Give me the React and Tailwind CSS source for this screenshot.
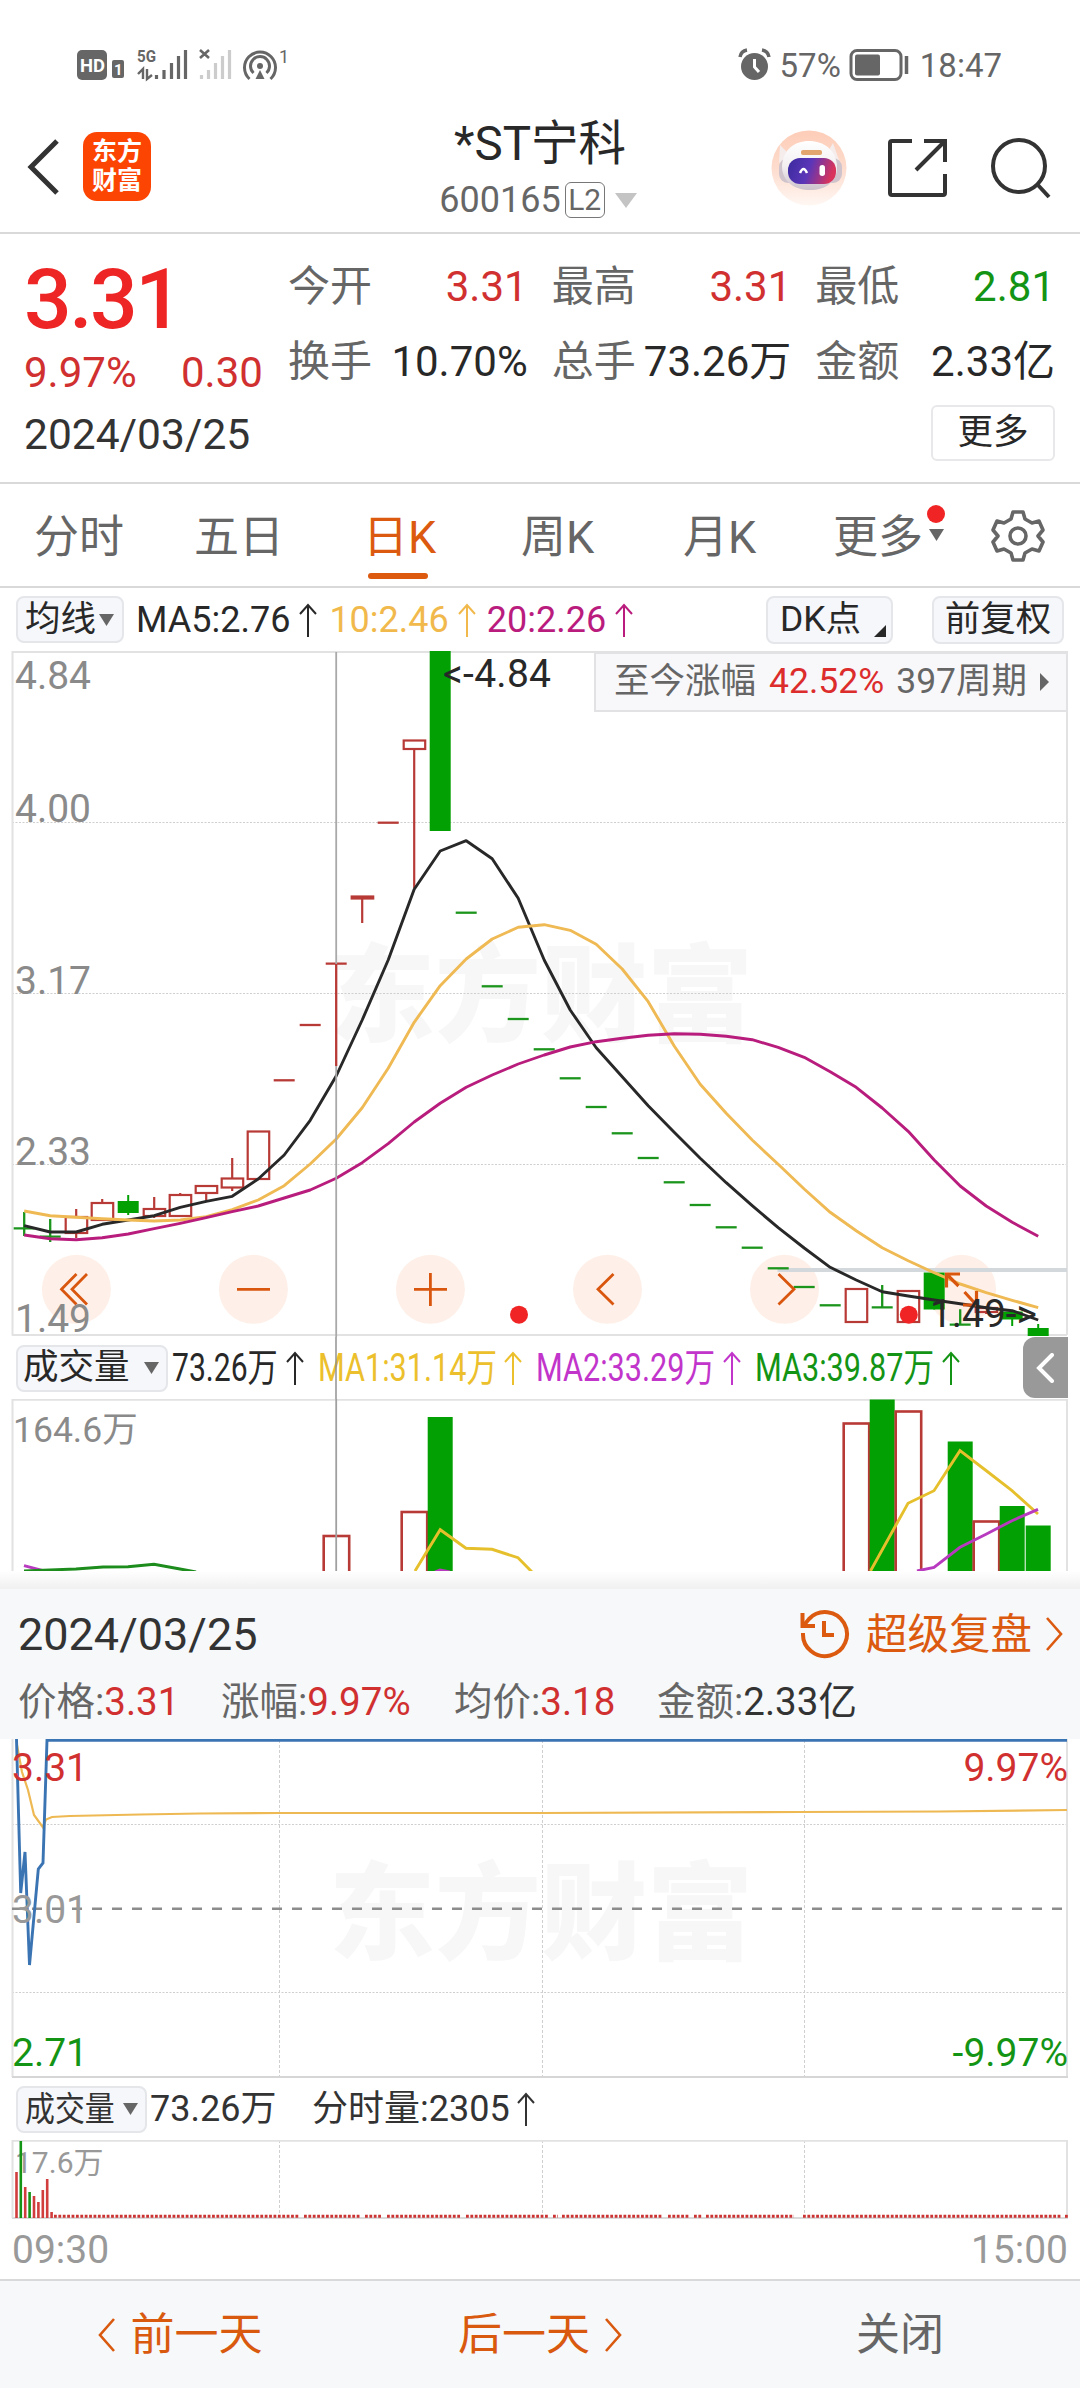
import React from "react";

const RED = "#b83a36";
const GREEN = "#02a002";

const X0 = 24.2;
const STEP = 26;
const cx = (i) => X0 + STEP * i;

// Candles: [index, colour, body top, body bottom, wick top, wick bottom]
const candles = [
  [2, "r", 1217, 1233, 1209, 1238],
  [3, "r", 1203, 1220, 1199, 1220],
  [4, "g", 1201, 1213, 1195, 1215],
  [5, "r", 1209, 1216, 1197, 1218],
  [6, "r", 1195, 1216, 1193, 1217],
  [7, "r", 1186, 1193, 1186, 1201],
  [8, "r", 1178.5, 1187.5, 1158, 1191],
  [9, "r", 1131.5, 1179, 1131.5, 1179],
  [13, "r", 896.5, 898.5, 896, 923],
  [15, "r", 740.5, 749, 740.5, 888],
  [16, "g", 651, 831, 651, 831],
  [32, "r", 1289, 1322, 1289, 1322],
  [34, "r", 1291, 1322, 1291, 1322],
  [35, "g", 1272.5, 1309.5, 1272.5, 1309.5],
  [37, "r", 1308, 1312, 1306, 1314],
  [38, "g", 1311.5, 1319.5, 1311.5, 1326],
  [39, "g", 1328, 1336, 1324, 1336],
];

// Flat days: [index, colour, y, wick top, wick bottom]
const flats = [
  [0, "g", 1228.3, 1212, 1236],
  [1, "g", 1236.7, 1219, 1242],
  [10, "r", 1080.3],
  [11, "r", 1025],
  [12, "r", 963.7, 963.7, 1066],
  [14, "r", 822.7],
  [17, "g", 912.7],
  [18, "g", 986.3],
  [19, "g", 1019],
  [20, "g", 1049.3],
  [21, "g", 1078.3],
  [22, "g", 1107],
  [23, "g", 1133.3],
  [24, "g", 1158],
  [25, "g", 1182.3],
  [26, "g", 1205],
  [27, "g", 1227.3],
  [28, "g", 1247.7],
  [29, "g", 1268.3],
  [30, "g", 1287],
  [31, "g", 1305.3],
  [33, "g", 1307.3, 1285, 1307.3],
  [36, "g", 1324.7, 1309.3, 1324.7],
];

const ma5 = [
  1225.7, 1232, 1232, 1224.3, 1220, 1215.7, 1207.3, 1201.3, 1196.3, 1179, 1155,
  1120.3, 1076, 1020, 960, 889.3, 851, 840.7, 858.7, 898.3, 960, 1010, 1047.7,
  1076.7, 1105.7, 1132.3, 1158.3, 1182.7, 1205.7, 1227.7, 1248, 1267.3, 1280,
  1291.7, 1296, 1300, 1303.7, 1307.7, 1310.7, 1320,
];
const ma10 = [
  1211, 1215.7, 1217.3, 1218.7, 1220, 1221, 1220, 1216.7, 1209.7, 1200, 1185.7,
  1164, 1139, 1107.7, 1068.3, 1022.3, 985.7, 959, 939, 927.3, 924.7, 930.3,
  944.3, 969, 1001.7, 1046, 1084.3, 1113.3, 1140, 1164.3, 1189, 1212.3, 1230.7,
  1247.7, 1260.7, 1272.7, 1284, 1292.7, 1300.3, 1307.7,
];
const ma20 = [
  1235, 1238.7, 1239.7, 1237.7, 1234, 1228.7, 1223.3, 1217.7, 1211.7, 1206,
  1198, 1190, 1178.3, 1162.7, 1143.7, 1122, 1103.3, 1087.3, 1075, 1064, 1055,
  1047, 1041.7, 1038.3, 1035.3, 1033.7, 1034.3, 1036.3, 1039.7, 1047.3, 1057.3,
  1071.7, 1087.3, 1108, 1131.3, 1160, 1186, 1206, 1222.3, 1236.3,
];

const volumes = [
  [12, "r", 1536],
  [15, "r", 1512],
  [16, "g", 1417],
  [32, "r", 1423.5],
  [33, "g", 1399.5],
  [34, "r", 1411.5],
  [36, "g", 1441.5],
  [37, "r", 1521.5],
  [38, "g", 1506],
  [39, "g", 1525.5],
];

const minuteBars = [
  [16.5, "r", 2172],
  [20.8, "g", 2141],
  [25.2, "r", 2187],
  [29.6, "g", 2192],
  [34, "r", 2196],
  [38.4, "r", 2202],
  [42.8, "r", 2190],
  [47.2, "r", 2179],
  [51.6, "r", 2212],
];

// Stretches of the session with trades in every minute
const tradedRanges = [
  [54, 299], [304, 360], [365, 382], [387, 461], [466, 549], [553, 558],
  [562, 662], [668, 689], [694, 702], [706, 794], [803, 1061], [1065, 1068],
];

const toPoints = (list) => list.map((y, i) => `${cx(i)},${y}`).join(" ");

const Watermark = ({ y }) => (
  <text
    x="329"
    y={y}
    fontSize="106"
    fontWeight="900"
    textLength="424"
    lengthAdjust="spacingAndGlyphs"
    fill="#f7f7f7"
  >
    东方财富
  </text>
);

const UpArrow = ({ className = "" }) => (
  <svg
    width="18"
    height="34"
    viewBox="0 0 18 34"
    fill="none"
    stroke="currentColor"
    strokeWidth="2"
    className={`shrink-0 ${className}`}
  >
    <path d="M9 34V2M1 11L9 2L17 11" />
  </svg>
);

const Chevron = ({ left, className = "" }) => (
  <svg
    width="18"
    height="34"
    viewBox="0 0 18 34"
    fill="none"
    stroke="currentColor"
    strokeWidth="2.6"
    className={className}
  >
    <path d={left ? "M16 1L2 17L16 33" : "M2 1L16 17L2 33"} />
  </svg>
);

const DownTriangle = ({ className = "" }) => (
  <svg width="15" height="12" viewBox="0 0 15 12" className={`shrink-0 fill-[#666] ${className}`}>
    <path d="M0 0H15L7.5 12Z" />
  </svg>
);

const StatusBar = () => (
  <div className="h-[130px] pt-[48px] pl-[77px] pr-[78px] flex items-start justify-between text-[#666]">
    <svg width="215" height="34" viewBox="77 48 215 34" fill="none" stroke="#666" className="overflow-visible">
      <rect x="77" y="50" width="30" height="30" rx="5" fill="#666" stroke="none" />
      <text x="80" y="72" fontSize="19" fontWeight="700" fill="#fff" stroke="none" textLength="25" lengthAdjust="spacingAndGlyphs">
        HD
      </text>
      <rect x="112" y="60" width="12" height="18" rx="2" fill="#666" stroke="none" />
      <text x="114" y="75" fontSize="15" fontWeight="700" fill="#fff" stroke="none">
        1
      </text>
      <text x="137" y="61.500" fontSize="17" fontWeight="700" fill="#666" stroke="none" textLength="19" lengthAdjust="spacingAndGlyphs">
        5G
      </text>
      <path d="M143 79V69L138 74M147 69V79L152 75" strokeWidth="2.4" />
      <path d="M156.500 75V79M164 70V79M171.500 63V79M178.500 56V79M185.500 50V79" strokeWidth="3.2" />
      <path d="M200 50L209 58M209 50L200 58" strokeWidth="2.6" />
      <path d="M201.500 75V79M208.500 70V79M215.500 63V79M222.500 56V79M229.500 50V79" strokeWidth="3.2" stroke="#ccc" />
      <path d="M249.500 79A15.500 15.500 0 1 1 270.500 79" strokeWidth="3" />
      <path d="M253.500 73A9.500 9.500 0 1 1 266.500 73" strokeWidth="3" />
      <circle cx="260" cy="66" r="3" fill="#666" stroke="none" />
      <path d="M260 70L255.500 79H264.500Z" fill="#666" stroke="none" />
      <text x="279" y="63" fontSize="18" fill="#666" stroke="none">
        1
      </text>
    </svg>
    <div className="flex items-center h-[34px] text-[33px] leading-none">
      <svg width="33" height="34" viewBox="737 48 33 34" className="mr-[9px]">
        <circle cx="753.500" cy="66.500" r="13.500" fill="#666" />
        <path d="M739 57Q740 51 746 50M761 50Q767 51 768 57" stroke="#666" strokeWidth="3.500" fill="none" />
        <path d="M753.500 59V67L758 72" stroke="#fff" strokeWidth="3" fill="none" />
      </svg>
      <span>57%</span>
      <svg width="60" height="34" viewBox="849 48 60 34" className="ml-[8px] mr-[11px]">
        <rect x="851" y="50.500" width="50" height="29" rx="6" fill="none" stroke="#666" strokeWidth="3" />
        <rect x="855" y="54.500" width="25" height="21" rx="2" fill="#666" />
        <path d="M906.500 56V74" stroke="#666" strokeWidth="3.500" />
      </svg>
      <span>18:47</span>
    </div>
  </div>
);

const RobotAvatar = () => (
  <svg width="78" height="78" viewBox="0 0 78 78">
    <defs>
      <linearGradient id="halo" x1="0" y1="0" x2="0" y2="1">
        <stop offset="0" stopColor="#fdcdb8" />
        <stop offset="0.5" stopColor="#fddccd" />
        <stop offset="1" stopColor="#fff7f3" />
      </linearGradient>
      <linearGradient id="visor" x1="0" y1="0" x2="1" y2="0.2">
        <stop offset="0" stopColor="#3b2a9e" />
        <stop offset="0.5" stopColor="#5b36b8" />
        <stop offset="1" stopColor="#d8345c" />
      </linearGradient>
      <linearGradient id="helmet" x1="0" y1="0" x2="0" y2="1">
        <stop offset="0" stopColor="#ffffff" />
        <stop offset="0.5" stopColor="#f4f0f2" />
        <stop offset="1" stopColor="#cdc3cb" />
      </linearGradient>
    </defs>
    <circle cx="39" cy="39" r="37.500" fill="url(#halo)" />
    <path d="M9 34L10 16L21 27ZM70 34L63 14L56 26Z" fill="#f5ecec" />
    <rect x="9" y="29" width="63" height="25" rx="9" fill="#cfc3cc" />
    <path d="M39 12C54 12 66 21 67 37C68 53 55 61 40 61C25 61 12 53 12 37C13 21 24 12 39 12Z" fill="url(#helmet)" />
    <rect x="18" y="29" width="48" height="26" rx="12" fill="url(#visor)" />
    <rect x="31" y="21" width="21" height="5" rx="2" fill="#e2a56e" />
    <path d="M30 44Q33.500 36 37 44" stroke="#fff" strokeWidth="2.500" fill="none" />
    <rect x="49.500" y="36" width="5.500" height="11" rx="2.700" fill="#fff" />
  </svg>
);

const Header = () => (
  <header className="h-[104px] border-b-2 border-[#d9d9d9] flex items-center justify-between pl-[26px] pr-[28px] pb-[27px] relative">
    <div className="flex items-center">
      <svg width="34" height="56" viewBox="0 0 34 56" fill="none" stroke="#333" strokeWidth="5" className="mt-[-2px]">
        <path d="M31 2L5 28L31 54" />
      </svg>
      <div className="ml-[23px] mt-[-2px] w-[68px] h-[69px] rounded-[14px] bg-[#fd4503] text-white font-bold text-[25px] leading-[29px] pt-[5px] text-center">
        东方
        <br />
        财富
      </div>
    </div>

    {/* Title sits over the bar so that it stays centred */}
    <div className="absolute left-0 right-0 top-[-11px] flex flex-col items-center">
      <h1 className="text-[47.500px] leading-[50px] text-[#282828]">*ST宁科</h1>
      <div className="mt-[12px] mr-[4px] h-[38px] flex items-center text-[#666] text-[36px] leading-none">
        600165
        <span className="ml-[4px] w-[40px] h-[36px] border-[1.500px] border-[#777] rounded-[6px] flex items-center justify-center text-[30px]">
          L2
        </span>
        <svg width="22" height="15" viewBox="0 0 22 15" className="ml-[10px] fill-[#c4c4c4]">
          <path d="M0 0H22L11 15Z" />
        </svg>
      </div>
    </div>

    <div className="flex items-center">
      <RobotAvatar />
      <svg width="62" height="62" viewBox="0 0 62 62" fill="none" stroke="#333" strokeWidth="4" className="ml-[39px]">
        <path d="M25 4H5Q3 4 3 6V56Q3 58 5 58H56Q58 58 58 56V37M37 4H58V25M57 5L29 33" />
      </svg>
      <svg width="62" height="62" viewBox="0 0 62 62" fill="none" stroke="#333" strokeWidth="4" className="ml-[41px]">
        <circle cx="29" cy="29" r="26" />
        <path d="M47 47L59 60" />
      </svg>
    </div>
  </header>
);

const stats = [
  ["今开", "3.31", "text-[#d13030]"],
  ["最高", "3.31", "text-[#d13030]"],
  ["最低", "2.81", "text-[#149414]"],
  ["换手", "10.70%", "text-[#282828]"],
  ["总手", "73.26万", "text-[#282828]"],
  ["金额", "2.33亿", "text-[#282828]"],
];

const QuotePanel = () => (
  <section className="h-[250px] border-b-2 border-[#d9d9d9] flex text-[42px] leading-none text-[#282828]">
    <div className="w-[288px] pl-[24px]">
      <div className="h-[127px] pt-[4px] flex items-center text-[84px] tracking-[-2.500px] font-medium text-[#ee2525]">
        3.31
      </div>
      <div className="h-[24px] flex items-center text-[#d13030]">
        <span className="w-[157px]">9.97%</span>
        <span>0.30</span>
      </div>
      <div className="h-[101px] flex items-center text-[42.500px] text-[#333]">2024/03/25</div>
    </div>
    <div className="w-[767px] pt-[15px] flex flex-col items-end">
      <div className="w-full grid grid-cols-3 gap-x-[24px]">
        {stats.map(([label, value, color]) => (
          <div key={label} className="h-[75px] flex items-center justify-between whitespace-nowrap">
            <span className="text-[#666]">{label}</span>
            <span className={color}>{value}</span>
          </div>
        ))}
      </div>
      <button className="mt-[6px] w-[124px] h-[56px] border-2 border-[#e8e8ea] rounded-[6px] text-[35.500px]">
        更多
      </button>
    </div>
  </section>
);

const Tabs = () => (
  <nav className="h-[104px] border-b-2 border-[#d9d9d9] flex text-[45px] leading-none text-[#666] pl-[34px] whitespace-nowrap">
    <span className="w-[160px] pt-[31px]">分时</span>
    <span className="w-[169px] pt-[31px]">五日</span>
    <div className="w-[158px] pt-[31px] text-[#dc5a10]">
      日K
      <div className="mt-[13px] ml-[5px] w-[60px] h-[6px] rounded-full bg-[#dc5a10]" />
    </div>
    <span className="w-[162px] pt-[31px]">周K</span>
    <span className="w-[150px] pt-[31px]">月K</span>
    <div className="w-[158px] pt-[31px] relative">
      更多
      <span className="absolute left-[94px] top-[21px] w-[18px] h-[18px] rounded-full bg-[#f02424]" />
      <DownTriangle className="absolute left-[96px] top-[45px]" />
    </div>
    <svg width="54" height="54" viewBox="0 0 54 54" fill="none" stroke="#666" strokeWidth="3.600" strokeLinejoin="round" className="mt-[25px]">
      <path d="M22 3H32L34 10L41 14L48 12L52 21L47 27L52 33L48 42L41 40L34 44L32 51H22L20 44L13 40L6 42L2 33L7 27L2 21L6 12L13 14L20 10Z" />
      <circle cx="27" cy="27" r="8" />
    </svg>
  </nav>
);

const IndicatorRow = () => (
  <div className="h-[63px] pl-[16px] pr-[16px] flex items-center justify-between text-[36px] leading-none text-[#282828] whitespace-nowrap">
    <div className="flex items-center">
      <div className="w-[108px] h-[47px] rounded-[8px] border-2 border-[#e4e6ea] bg-[#f6f7fa] flex items-center pl-[7px] text-[35.500px]">
        均线
        <DownTriangle className="ml-[3px]" />
      </div>
      <span className="ml-[12px]">MA5:2.76</span>
      <UpArrow className="ml-[9px]" />
      <span className="ml-[12px] flex items-center text-[#f1b94c]">
        10:2.46
        <UpArrow className="ml-[9px]" />
      </span>
      <span className="ml-[11px] flex items-center text-[#ba1c7e]">
        20:2.26
        <UpArrow className="ml-[9px]" />
      </span>
    </div>
    <div className="flex gap-[39px] text-[35.500px]">
      <div className="w-[127px] h-[48px] rounded-[8px] border-2 border-[#e4e6ea] bg-[#f6f7fa] flex items-center pl-[12px] relative">
        DK点
        <svg width="12" height="12" className="absolute right-[5px] bottom-[5px] fill-[#282828]">
          <path d="M12 0V12H0Z" />
        </svg>
      </div>
      <div className="w-[132px] h-[48px] rounded-[8px] border-2 border-[#e4e6ea] bg-[#f6f7fa] flex items-center justify-center">
        前复权
      </div>
    </div>
  </div>
);

const ControlDiscs = () => (
  <g fill="#fef0e8">
    {[76.4, 253.4, 430.4, 607.5, 784.5, 961.6].map((x) => (
      <circle key={x} cx={x} cy="1289.300" r="34.500" />
    ))}
  </g>
);

const ControlIcons = () => (
  <g fill="none" stroke="#d9560f" strokeWidth="2.800">
    <path d="M76.500 1274L61.500 1289.300L76.500 1304.500M87 1274L72 1289.300L87 1304.500" />
    <path d="M237 1289.300H270M414 1289.300H447M430.400 1273V1306" />
    <path d="M613.500 1274L598 1289.300L613.500 1304.500M778.500 1274L794 1289.300L778.500 1304.500" />
    <path
      d="M946.500 1287.500V1274H960M947 1274.500L958.500 1286M976.500 1291V1305H963M964.500 1292L976 1304.500"
      strokeWidth="3.200"
    />
  </g>
);

const KLineChart = () => (
  <div className="relative h-[686px]">
    <svg width="1080" height="686" viewBox="0 651 1080 686" className="block overflow-visible">
      <Watermark y="1033" />
      <g stroke="#cfcfcf" strokeWidth="1" strokeDasharray="2 1.500">
        <path d="M12 822.500H1067M12 993.500H1067M12 1164.500H1067" />
      </g>
      <path d="M12.500 651V1335.500M12 652H1067M1067 651V1335M12 1335H1067" stroke="#e2e2e2" strokeWidth="2" fill="none" />
      <ControlDiscs />
      <path d="M777.500 1270H1067" stroke="#d3d8dc" strokeWidth="4" />

      {candles.map(([i, c, top, bottom, high, low]) =>
        c === "g" ? (
          <g key={i} fill={GREEN} stroke={GREEN} strokeWidth="2">
            <path d={`M${cx(i)} ${high}V${low}`} />
            <rect x={cx(i) - 10.5} y={top} width="21" height={bottom - top} stroke="none" />
          </g>
        ) : (
          <g key={i} fill="none" stroke={RED} strokeWidth="2.200">
            <path d={`M${cx(i)} ${high}V${top}M${cx(i)} ${bottom}V${low}`} />
            <rect x={cx(i) - 10.5} y={top} width="21.500" height={bottom - top} />
          </g>
        )
      )}
      {flats.map(([i, c, y, high, low]) => (
        <path
          key={i}
          d={`M${cx(i) - 10.5} ${y}H${cx(i) + 10.5}` + (high ? `M${cx(i)} ${high}V${low}` : "")}
          stroke={c === "g" ? "#1c951c" : RED}
          strokeWidth="2.300"
          fill="none"
        />
      ))}

      <g fill="none" strokeWidth="2.900" strokeLinejoin="round">
        <polyline points={toPoints(ma5)} stroke="#282828" />
        <polyline points={toPoints(ma10)} stroke="#efb953" />
        <polyline points={toPoints(ma20)} stroke="#b81c7c" />
      </g>
      <ControlIcons />

      <g fontSize="39" fill="#8a8a8a">
        <text x="15" y="689">4.84</text>
        <text x="15" y="821.500">4.00</text>
        <text x="15" y="993.500">3.17</text>
        <text x="15" y="1164.500">2.33</text>
        <text x="15" y="1331.500">1.49</text>
      </g>
      <g fontSize="39" fill="#282828">
        <text x="443" y="686.500" textLength="108">&lt;-4.84</text>
        <text x="930" y="1326.500" textLength="107">1.49-&gt;</text>
      </g>
      <circle cx="519" cy="1314.700" r="9" fill="#f02424" />
      <circle cx="908.800" cy="1314.700" r="9" fill="#f02424" />
      <path d="M336.200 652V964M336.200 1066V1337" stroke="#a9a9a9" strokeWidth="1.800" />
    </svg>

    {/* Gain-to-date ribbon in the chart corner */}
    <div className="absolute top-px left-[594px] w-[474px] h-[60px] bg-[#f8f8fa] border-2 border-[#e2e2e4] flex items-center pl-[18px] text-[35.500px] leading-none text-[#666] whitespace-nowrap">
      至今涨幅
      <span className="ml-[13px] text-[#dc2c2c]">42.52%</span>
      <span className="ml-[12px]">397周期</span>
      <svg width="10" height="18" className="ml-[13px] fill-[#666]">
        <path d="M0 0L9 9L0 18Z" />
      </svg>
    </div>
  </div>
);

// Text squeezed horizontally into the width of its box
const Narrow = ({ children, className, scale = "scale-x-[0.785]" }) => (
  <span className={`shrink-0 ${className}`}>
    <span className={`inline-block origin-left whitespace-nowrap ${scale}`}>{children}</span>
  </span>
);

const VolumeHeader = () => (
  <div className="relative h-[62px] pl-[16px] flex items-center text-[39px] leading-none text-[#282828]">
    <div className="w-[152px] h-[47px] shrink-0 rounded-[8px] border-2 border-[#e4e6ea] bg-[#f6f7fa] flex items-center pl-[5px] text-[35.500px]">
      成交量
      <DownTriangle className="ml-[14px]" />
    </div>
    <Narrow className="ml-[4px] w-[114px]" scale="scale-x-[0.772]">
      73.26万
    </Narrow>
    <UpArrow />
    <div className="ml-[14px] flex items-center text-[#ecc02c]">
      <Narrow className="w-[186px]">MA1:31.14万</Narrow>
      <UpArrow />
    </div>
    <div className="ml-[14px] flex items-center text-[#c235cb]">
      <Narrow className="w-[187px]">MA2:33.29万</Narrow>
      <UpArrow />
    </div>
    <div className="ml-[14px] flex items-center text-[#149414]">
      <Narrow className="w-[187px]">MA3:39.87万</Narrow>
      <UpArrow />
    </div>
    <div className="absolute left-[336px] -ml-px top-0 w-[2px] h-full bg-[#8a8a8a]/70" />
    <div className="absolute left-[1023px] top-0 w-[45px] h-[61px] rounded-l-[12px] bg-[#999] flex items-center justify-center">
      <svg width="20" height="30" viewBox="0 0 20 30" fill="none" stroke="#fff" strokeWidth="4" strokeLinecap="round">
        <path d="M16 2L3 15L16 28" />
      </svg>
    </div>
  </div>
);

const VolumeChart = () => (
  <svg width="1080" height="172" viewBox="0 1399 1080 172" className="block">
    <path d="M12.500 1399V1571M12 1399.800H1067M1067 1399V1571" stroke="#e2e2e2" strokeWidth="2" fill="none" />
    <text x="13" y="1442" fontSize="35.500" fill="#8a8a8a">
      164.6万
    </text>
    {volumes.map(([i, c, top]) =>
      c === "g" ? (
        <rect key={i} x={cx(i) - 12.5} y={top} width="25" height="180" fill={GREEN} />
      ) : (
        <rect key={i} x={cx(i) - 12.5} y={top} width="25.500" height="180" fill="none" stroke={RED} strokeWidth="2.600" />
      )
    )}
    <g fill="none" strokeWidth="2.900">
      <path d="M24 1565.700L48 1572M435 1572L440 1570L450 1572" stroke="#b83abf" />
      <path d="M24 1571L76 1569L103 1567L128 1566.700L154 1564.300L180 1569L196 1572" stroke="#1c8c1c" />
      <path d="M415 1571L440.200 1529.700L466 1548.300L492 1549.300L518 1557.700L532 1572" stroke="#e6c02c" />
      <path d="M870.500 1571L908 1503.300L934 1490.700L960 1450.700L986 1470.500L1012 1490.700L1038 1514" stroke="#e6c02c" />
      <path d="M917 1571L934 1567.300L960 1547.300L986 1534.300L1012 1520.700L1038 1509.300" stroke="#b83abf" />
    </g>
    <path d="M336.200 1399V1571" stroke="#a0a0a0" strokeWidth="1.800" />
  </svg>
);

const DayHeader = () => (
  <section>
    <div className="h-[18px] bg-gradient-to-b from-white to-[#f0f0f0]" />
    <div className="h-[150px] bg-[#f6f8fa] text-[#333] leading-none whitespace-nowrap">
      <div className="h-[89px] pl-[18px] pr-[17px] flex items-center justify-between text-[45px]">
        <span className="mt-[1px]">2024/03/25</span>
        <div className="flex items-center text-[41.500px] text-[#dc5a10]">
          <svg width="50" height="50" viewBox="0 0 50 50" fill="none" stroke="currentColor" strokeWidth="4" className="mr-[16px]">
            <path d="M3 24A22 22 0 1 0 9 10L4 16" />
            <path d="M2.500 4V17H15M24 12V26H34" />
          </svg>
          <span className="mt-[2px]">超级复盘</span>
          <Chevron className="ml-[13px]" />
        </div>
      </div>
      <div className="h-[49px] pl-[18px] flex items-center text-[38.500px] text-[#666]">
        <span className="w-[203px]">
          价格:<span className="text-[#d13030]">3.31</span>
        </span>
        <span className="w-[233px]">
          涨幅:<span className="text-[#d13030]">9.97%</span>
        </span>
        <span className="w-[203px]">
          均价:<span className="text-[#d13030]">3.18</span>
        </span>
        <span>
          金额:<span className="text-[#333]">2.33亿</span>
        </span>
      </div>
    </div>
  </section>
);

const IntradayChart = () => (
  <svg width="1080" height="339" viewBox="0 1739 1080 339" className="block">
    <Watermark y="1951" />
    <g stroke="#cfcfcf" strokeWidth="1" strokeDasharray="2 1.500">
      <path d="M12 1824.500H1067M12 1992.500H1067" />
      <path d="M279.500 1740V2077M542.500 1740V2077M804.500 1740V2077" strokeDasharray="3 2" />
    </g>
    <path d="M12.500 1739V2077M1067 1739V2077" stroke="#e2e2e2" strokeWidth="2" />
    <path d="M12 2077H1068" stroke="#d6d6d6" strokeWidth="2" />
    <path d="M12 1908.700H1067" stroke="#8c8c8c" strokeWidth="2.400" strokeDasharray="10 10" />
    <path
      d="M17 1745L22 1772L28 1790L34 1815L42.700 1827L46 1819.500L52 1817L70 1816L140 1814.500L200 1813.500L280 1813H540L800 1812L940 1811.500L1067 1810"
      fill="none"
      stroke="#eeb953"
      strokeWidth="2.200"
    />
    <path
      d="M16.500 1739L20.700 1893L25 1852L29.500 1965L38.300 1869L43 1863L47 1740.300H1067"
      fill="none"
      stroke="#3b74b3"
      strokeWidth="2.900"
    />
    <g fontSize="39">
      <text x="12" y="1781" fill="#d13030">3.31</text>
      <text x="1068" y="1781" fill="#d13030" textAnchor="end">9.97%</text>
      <text x="12" y="1922.500" fill="#999">3.01</text>
      <text x="12" y="2065.500" fill="#149414">2.71</text>
      <text x="1068" y="2065.500" fill="#149414" textAnchor="end">-9.97%</text>
    </g>
  </svg>
);

const IntradayVolume = () => (
  <section>
    <div className="h-[62px] pl-[16px] flex items-center text-[36px] leading-none text-[#333] whitespace-nowrap">
      <div className="w-[131px] h-[47px] rounded-[8px] border-2 border-[#e4e6ea] bg-[#f6f7fa] flex items-center pl-[7px] text-[34px]">
        <Narrow className="w-[98px]" scale="scale-x-[0.880]">
          成交量
        </Narrow>
        <DownTriangle />
      </div>
      <span className="ml-[3px] w-[162px]">73.26万</span>
      <span>分时量:2305</span>
      <UpArrow className="ml-[7px]" />
    </div>
    <svg width="1080" height="79" viewBox="0 2140 1080 79" className="block">
      <path d="M279.500 2140V2218M542.500 2140V2218M804.500 2140V2218" stroke="#cfcfcf" strokeDasharray="3 2" />
      <path d="M12 2218H1068" stroke="#dadada" strokeWidth="2" />
      <path d="M12.500 2140V2218M12 2140.800H1067M1067 2140V2218" stroke="#e2e2e2" strokeWidth="2" fill="none" />
      {tradedRanges.map(([from, to]) => (
        <path key={from} d={`M${from} 2216.300H${to}`} stroke="#c33" strokeWidth="3" strokeDasharray="2.800 1.590" />
      ))}
      <text x="15" y="2173" fontSize="30" fill="#999">
        17.6万
      </text>
      {minuteBars.map(([x, c, top]) => (
        <path key={x} d={`M${x} ${top}V2218`} stroke={c === "g" ? "#149414" : "#d13c3c"} strokeWidth="2.600" />
      ))}
    </svg>
    <div className="h-[60px] pt-[2px] pl-[12px] pr-[12px] flex items-center justify-between text-[39px] leading-none text-[#999]">
      <span>09:30</span>
      <span>15:00</span>
    </div>
  </section>
);

const BottomBar = () => (
  <footer className="h-[110px] bg-[#f6f8fa] border-t-2 border-[#d9d9d9] pb-px flex items-center text-[44px] leading-none text-[#d9590f] whitespace-nowrap">
    <button className="w-[360px] flex items-center justify-center">
      <Chevron left className="mr-[15px]" />
      前一天
    </button>
    <button className="w-[360px] flex items-center justify-center">
      后一天
      <Chevron className="ml-[14px]" />
    </button>
    <button className="w-[360px] text-[#666]">关闭</button>
  </footer>
);

export default function App() {
  return (
    <div className="w-[1080px] h-[2388px] overflow-hidden bg-white font-[Roboto,'Noto_Sans_CJK_SC',sans-serif]">
      <StatusBar />
      <Header />
      <QuotePanel />
      <Tabs />
      <IndicatorRow />
      <KLineChart />
      <VolumeHeader />
      <VolumeChart />
      <DayHeader />
      <IntradayChart />
      <IntradayVolume />
      <BottomBar />
    </div>
  );
}
